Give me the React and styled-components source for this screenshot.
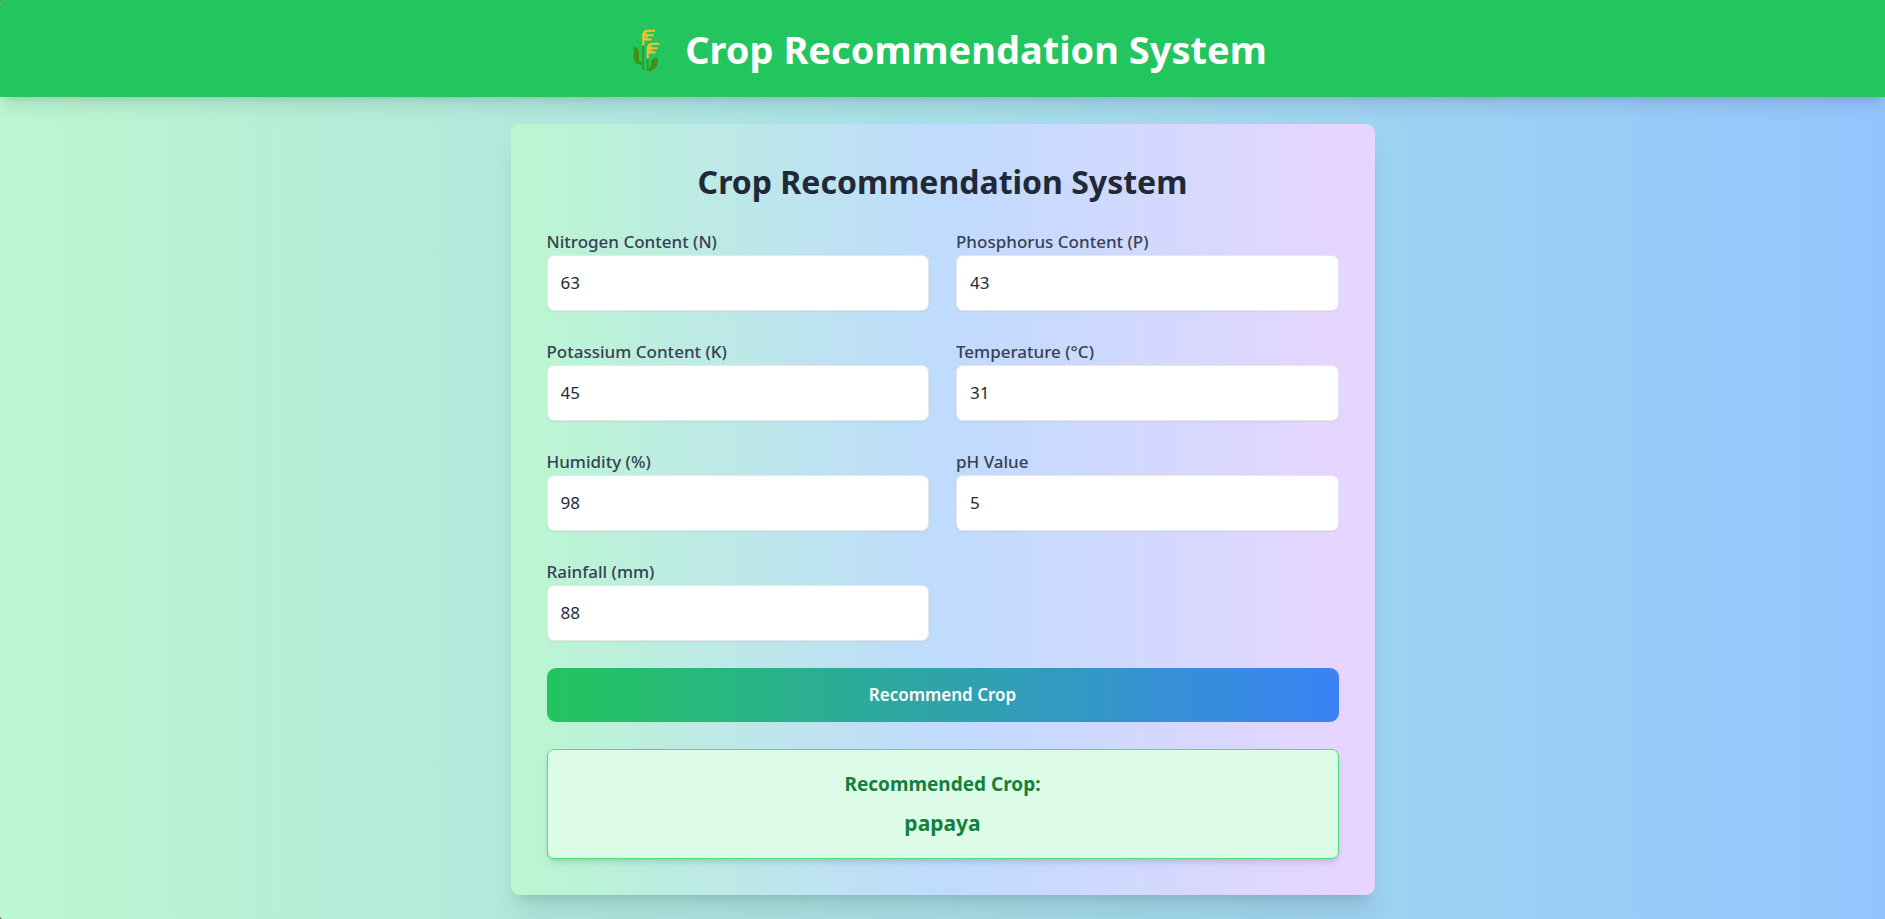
import React, { useState } from "react";
import styled, { createGlobalStyle } from "styled-components";

const GlobalStyle = createGlobalStyle`
  *, *::before, *::after { box-sizing: border-box; }
  html { background: #4b4b4b; }
  body {
    margin: 0;
    font-family: "Noto Sans", "Open Sans", sans-serif;
    font-size: 17px;
    line-height: 27px;
  }
  h1, h2, h3, p { margin: 0; }
`;

const Page = styled.div`
  min-height: 100vh;
  padding-bottom: 24px;
  border-radius: 3px 0 0 3px;
  overflow: hidden;
  background: linear-gradient(to right, #bbf7d0, #93c5fd);
`;

const Header = styled.header`
  display: flex;
  align-items: center;
  justify-content: center;
  gap: 13px;
  min-height: 97px;
  padding: 26px 24px 24px;
  background: #22c55e;
  color: #fff;
  box-shadow: 0 11px 17px -3px rgba(0, 0, 0, 0.1), 0 5px 7px -4px rgba(0, 0, 0, 0.1);
`;

const HeaderTitle = styled.h1`
  font-size: 38px;
  font-weight: 700;
  line-height: 47px;
`;

const Card = styled.main`
  max-width: 864px;
  margin: 27px auto 0;
  padding: 36px;
  border-radius: 9px;
  background: linear-gradient(to right, #bbf7d0, #bfdbfe, #e9d5ff);
  box-shadow: 0 22px 28px -6px rgba(0, 0, 0, 0.1), 0 9px 11px -7px rgba(0, 0, 0, 0.1);
`;

const CardTitle = styled.h2`
  padding-top: 2px;
  margin-bottom: 26px;
  color: #1f2937;
  font-size: 32px;
  font-weight: 700;
  line-height: 40px;
  text-align: center;
`;

const Form = styled.form`
  display: grid;
  grid-template-columns: 1fr 1fr;
  gap: 27px;
`;

const Field = styled.div`
  display: flex;
  flex-direction: column;
`;

const Label = styled.label`
  color: #374151;
  font-weight: 500;
`;

const Input = styled.input`
  width: 100%;
  height: 56px;
  padding: 12px 13px 14px;
  border: 1px solid #e5e7eb;
  border-radius: 7px;
  background: #fff;
  color: #1f2937;
  font: inherit;
  box-shadow: 0 1px 2px rgba(0, 0, 0, 0.05);
`;

const SubmitButton = styled.button`
  grid-column: 1 / -1;
  padding: 13px;
  border: 0;
  border-radius: 9px;
  background: linear-gradient(to right, #22c55e, #3b82f6);
  color: #fff;
  font: inherit;
  font-weight: 600;
  line-height: 28px;
  cursor: pointer;
`;

const Result = styled.section`
  display: grid;
  gap: 8px;
  margin-top: 27px;
  padding: 19px;
  border: 1px solid #4ade80;
  border-radius: 7px;
  background: #dcfce7;
  color: #15803d;
  font-weight: 700;
  text-align: center;
  box-shadow: 0 5px 7px -1px rgba(0, 0, 0, 0.1), 0 2px 5px -2px rgba(0, 0, 0, 0.1);
`;

const ResultTitle = styled.h3`
  font-size: 19px;
  line-height: 31px;
`;

const ResultValue = styled.p`
  font-size: 21px;
  line-height: 31px;
`;

const fields = [
  { id: "nitrogen", label: "Nitrogen Content (N)", value: "63" },
  { id: "phosphorus", label: "Phosphorus Content (P)", value: "43" },
  { id: "potassium", label: "Potassium Content (K)", value: "45" },
  { id: "temperature", label: "Temperature (°C)", value: "31" },
  { id: "humidity", label: "Humidity (%)", value: "98" },
  { id: "ph", label: "pH Value", value: "5" },
  { id: "rainfall", label: "Rainfall (mm)", value: "88" },
];

function CropIcon() {
  return (
    <svg width="54" height="44" viewBox="-15 0 54 44" fill="none" aria-hidden="true">
      <path d="M0.7 19c3.500 0 5.300 2.500 5.300 5.500V32c0 1.500 1 2.300 3 2.300v2.200C4 36.500 0.700 34 0.700 29z" fill="#40911b" />
      <path d="M24.800 29.500c-4.500 0-7 2.500-7 6.500 0 2.500-0.800 3.800-1.800 4.200V42c5.500 0 8.800-3 8.800-8z" fill="#40911b" />
      <path d="M10.200 17v25M14.800 29v13h4" stroke="#40911b" strokeWidth="1.800" />
      <path
        d="M10.200 17.500V7.500c0-3 2-4.800 5-4.800h6.800M11 7.300h9.500M11 11.500h7.500M14.800 30.500V20.500c0-3 2-4.800 5-4.800h6.500M15.500 20.200h9M15.500 24.500h7"
        stroke="#fbc02d"
        strokeWidth="2"
      />
      <path d="M10 12V7q0-4 4-4l1 9zM14.600 25v-5q0-4 4-4l1 8z" fill="#fbc02d" fillOpacity="0.600" />
    </svg>
  );
}

export default function App() {
  const [values, setValues] = useState(() =>
    Object.fromEntries(fields.map((f) => [f.id, f.value]))
  );

  return (
    <>
      <GlobalStyle />
      <Page>
        <Header>
          <CropIcon />
          <HeaderTitle>Crop Recommendation System</HeaderTitle>
        </Header>
        <Card>
          <CardTitle>Crop Recommendation System</CardTitle>
          <Form onSubmit={(e) => e.preventDefault()}>
            {fields.map((f) => (
              <Field key={f.id}>
                <Label htmlFor={f.id}>{f.label}</Label>
                <Input
                  id={f.id}
                  inputMode="decimal"
                  value={values[f.id]}
                  onChange={(e) => setValues({ ...values, [f.id]: e.target.value })}
                />
              </Field>
            ))}
            <SubmitButton type="submit">Recommend Crop</SubmitButton>
          </Form>
          <Result>
            <ResultTitle>Recommended Crop:</ResultTitle>
            <ResultValue>papaya</ResultValue>
          </Result>
        </Card>
      </Page>
    </>
  );
}
